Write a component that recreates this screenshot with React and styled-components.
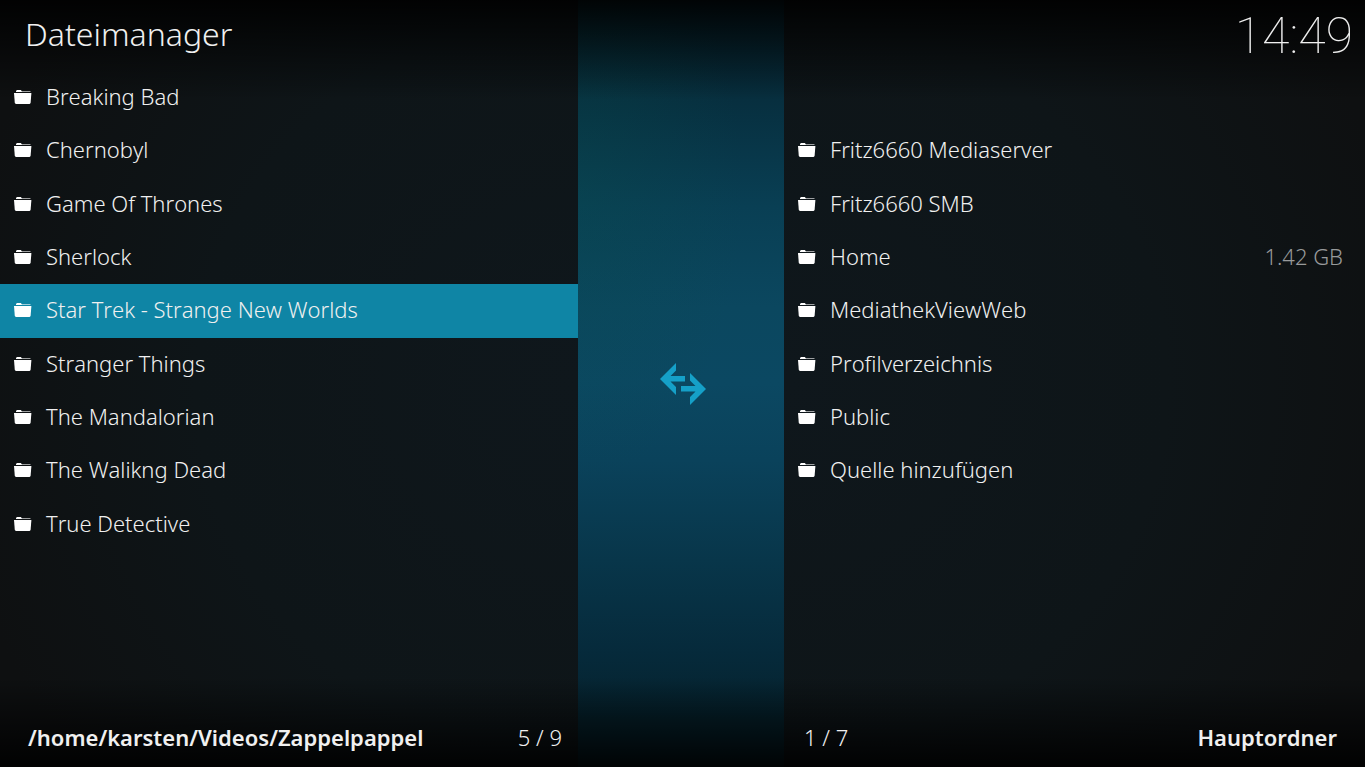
import React from "react";
import styled, { createGlobalStyle } from "styled-components";

const GlobalStyle = createGlobalStyle`
  * {
    box-sizing: border-box;
  }

  body {
    margin: 0;
    background: #000;
    color: #f0f0f0;
    font-family: "Noto Sans", "Open Sans", sans-serif;
    font-kerning: none;
  }
`;

const Screen = styled.main`
  display: grid;
  grid-template-columns: minmax(0, 578fr) minmax(0, 206fr) minmax(0, 581fr);
  min-height: 100vh;
`;

const Panel = styled.section`
  display: flex;
  flex-direction: column;
  background:
    linear-gradient(
      to bottom,
      rgba(0, 0, 0, 0.9) 0,
      rgba(0, 0, 0, 0) 100px,
      rgba(0, 0, 0, 0) calc(100% - 90px),
      rgba(0, 0, 0, 0.9) 100%
    ),
    radial-gradient(
      ellipse 110% 80% at ${({ $side }) => ($side === "left" ? "100%" : "0%")}
        50%,
      #0f171c,
      #0e1518 60%,
      #0e1011
    );
`;

const PanelHeader = styled.header`
  display: flex;
  align-items: center;
  justify-content: ${({ $align }) => $align};
  height: 71px;
  padding: 0 12px 0 25px;
`;

const Title = styled.h1`
  margin: 0;
  padding-bottom: 4px;
  font-size: 32px;
  line-height: 40px;
  font-weight: 300;
`;

const Clock = styled.time`
  font-family: Roboto, sans-serif;
  font-size: 50px;
  line-height: 60px;
  font-weight: 100;
`;

const FileList = styled.ul`
  display: grid;
  flex: 1;
  grid-template-rows: repeat(12, minmax(0, 1fr));
  margin: 0;
  padding: 0;
  list-style: none;
`;

const FileItem = styled.li`
  display: flex;
  grid-row: ${({ $row }) => $row};
`;

const FileButton = styled.button`
  display: flex;
  flex: 1;
  align-items: center;
  gap: 14px;
  padding: 0 22px 3px 14px;
  border: 0;
  background: ${({ $selected }) => ($selected ? "#0f85a5" : "transparent")};
  color: inherit;
  font: inherit;
  font-kerning: none;
  font-size: 22px;
  line-height: 30px;
  font-weight: 300;
  text-align: left;
  cursor: pointer;
`;

const FileName = styled.span`
  flex: 1;
`;

const FileSize = styled.span`
  color: #989a9b;
`;

const PanelFooter = styled.footer`
  display: flex;
  flex-direction: ${({ $reverse }) => ($reverse ? "row-reverse" : "row")};
  align-items: center;
  justify-content: space-between;
  height: 56px;
  padding: ${({ $reverse }) => ($reverse ? "0 28px 4px 20px" : "0 16px 4px 28px")};
  font-size: 22px;
  line-height: 30px;
`;

const Path = styled.strong`
  font-weight: 600;
`;

const Position = styled.span`
  font-weight: 300;
`;

const Divider = styled.div`
  display: flex;
  align-items: center;
  justify-content: center;
  padding-left: 4px;
  background:
    linear-gradient(
      to bottom,
      rgba(0, 0, 0, 0.9) 0,
      rgba(0, 0, 0, 0) 100px,
      rgba(0, 0, 0, 0) calc(100% - 90px),
      rgba(0, 0, 0, 0.9) 100%
    ),
    radial-gradient(
      ellipse 80% 38% at 0% 25%,
      rgba(8, 76, 76, 0.3),
      rgba(8, 76, 76, 0)
    ),
    linear-gradient(
      to bottom,
      #062733 0%,
      #072f3f 13%,
      #093f54 27%,
      #0b475f 40%,
      #0b4862 50%,
      #0a425b 60%,
      #08364a 73%,
      #062a3b 85%,
      #05222d 94%
    );
`;

const SwapButton = styled.button`
  display: flex;
  padding: 0;
  border: 0;
  background: none;
  color: #15a0c8;
  cursor: pointer;
`;

const leftFiles = [
  "Breaking Bad",
  "Chernobyl",
  "Game Of Thrones",
  "Sherlock",
  "Star Trek - Strange New Worlds",
  "Stranger Things",
  "The Mandalorian",
  "The Walikng Dead",
  "True Detective",
].map((name) => ({ name }));

const rightFiles = [
  { name: "Fritz6660 Mediaserver" },
  { name: "Fritz6660 SMB" },
  { name: "Home", size: "1.42 GB" },
  { name: "MediathekViewWeb" },
  { name: "Profilverzeichnis" },
  { name: "Public" },
  { name: "Quelle hinzufügen" },
];

const FolderIcon = () => (
  <svg width="18" height="16" viewBox="0 -2 18 16" aria-hidden="true">
    <path d="M2 1h14.500v1H2z" fill="#fff" fillOpacity="0.6" />
    <path d="M2 2V1l1-1h4l1 2z" fill="#fff" />
    <path d="M0 3h17.400L16.600 13l-1 1H1.800l-1-1z" fill="#fff" />
  </svg>
);

const SwapIcon = () => (
  <svg width="46" height="42" viewBox="0 0 46 42" aria-hidden="true">
    <path
      d="M0 16 16 0v7.500L10.500 13H25v5.500H10.500l5.500 5.500v8z"
      fill="currentColor"
    />
    <path
      d="M46 26 30 10v7.500l5.500 5.500H21v5.500h14.500L30 34v8z"
      fill="currentColor"
    />
  </svg>
);

const Files = ({ label, files, selected, firstRow = 1 }) => (
  <FileList aria-label={label}>
    {files.map(({ name, size }, index) => (
      <FileItem key={name} $row={firstRow + index}>
        <FileButton type="button" $selected={name === selected}>
          <FolderIcon />
          <FileName>{name}</FileName>
          {size && <FileSize>{size}</FileSize>}
        </FileButton>
      </FileItem>
    ))}
  </FileList>
);

const App = () => {
  return (
    <>
      <GlobalStyle />
      <Screen>
        <Panel $side="left">
          <PanelHeader $align="flex-start">
            <Title>Dateimanager</Title>
          </PanelHeader>
          <Files
            label="Zappelpappel"
            files={leftFiles}
            selected="Star Trek - Strange New Worlds"
          />
          <PanelFooter>
            <Path>/home/karsten/Videos/Zappelpappel</Path>
            <Position>5 / 9</Position>
          </PanelFooter>
        </Panel>

        <Divider>
          <SwapButton type="button" aria-label="Ordner wechseln">
            <SwapIcon />
          </SwapButton>
        </Divider>

        <Panel $side="right">
          <PanelHeader $align="flex-end">
            <Clock>14:49</Clock>
          </PanelHeader>
          <Files label="Hauptordner" files={rightFiles} firstRow={2} />
          <PanelFooter $reverse>
            <Path>Hauptordner</Path>
            <Position>1 / 7</Position>
          </PanelFooter>
        </Panel>
      </Screen>
    </>
  );
};

export default App;
